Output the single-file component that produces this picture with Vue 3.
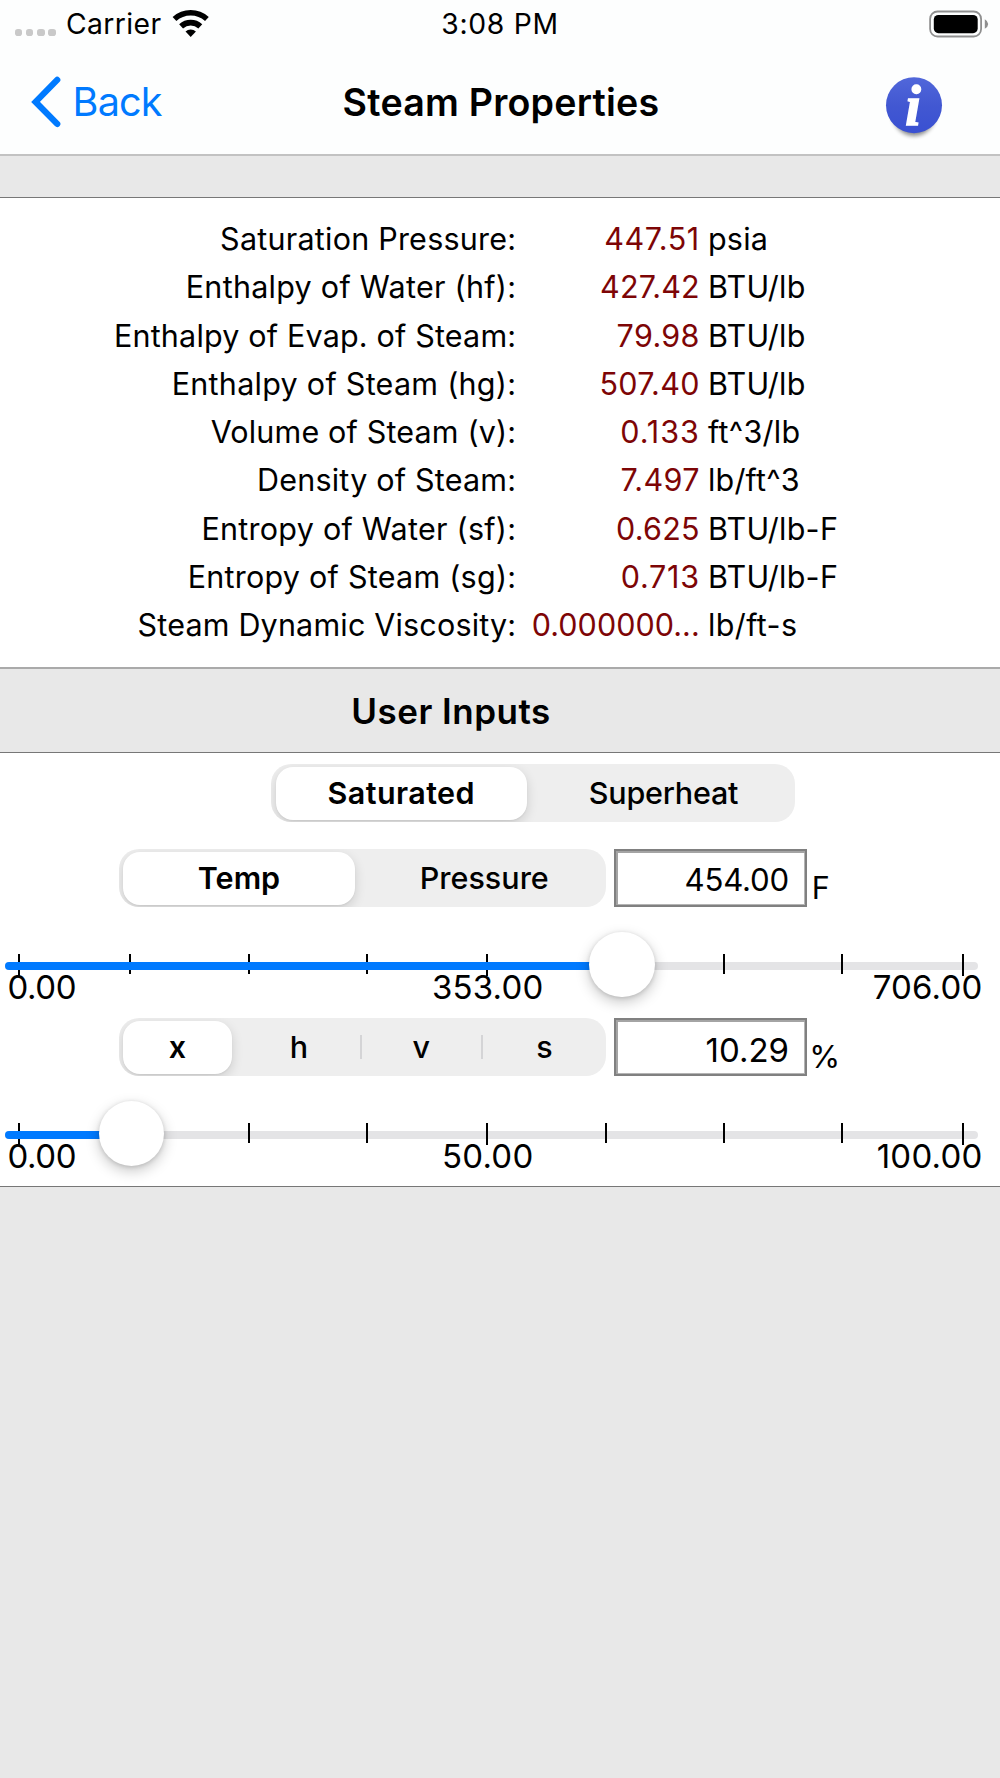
<script setup>
const properties = [
  { label: 'Saturation Pressure:', value: '447.51', unit: 'psia', ls: [0.23, 0.55, 0.2] },
  { label: 'Enthalpy of Water (hf):', value: '427.42', unit: 'BTU/lb', ls: [0.27, 0.15, 0.3] },
  { label: 'Enthalpy of Evap. of Steam:', value: '79.98', unit: 'BTU/lb', ls: [0.18, 0.35, 0.3] },
  { label: 'Enthalpy of Steam (hg):', value: '507.40', unit: 'BTU/lb', ls: [0.27, 0.32, 0.3] },
  { label: 'Volume of Steam (v):', value: '0.133', unit: 'ft^3/lb', ls: [0.16, 0.96, 0.28] },
  { label: 'Density of Steam:', value: '7.497', unit: 'lb/ft^3', ls: [0.21, 0.36, 0.18] },
  { label: 'Entropy of Water (sf):', value: '0.625', unit: 'BTU/lb-F', ls: [0.26, 0.25, 0.28] },
  { label: 'Entropy of Steam (sg):', value: '0.713', unit: 'BTU/lb-F', ls: [0.25, 0.75, 0.28] },
  { label: 'Steam Dynamic Viscosity:', value: '0.000000...', unit: 'lb/ft-s', ls: [0.18, 0.05, 0.38] },
]

const ticks = [
  { x: 18, long: true },
  { x: 129 },
  { x: 247.5 },
  { x: 366 },
  { x: 486.4, long: true },
  { x: 605 },
  { x: 723 },
  { x: 841.4 },
  { x: 962, long: true },
]

const sliders = {
  temp: { knob: 622, labels: ['0.00', '353.00', '706.00'] },
  quality: { knob: 131.7, labels: ['0.00', '50.00', '100.00'] },
}

const spacing = (px) => ({ letterSpacing: px + 'px' })
</script>

<template>
  <div class="screen">
    <header class="top">
      <div class="status">
        <div class="carrier">
          <span class="dots"><i v-for="n in 4" :key="n"></i></span>
          <span class="carrier-name">Carrier</span>
          <svg class="wifi" width="40" height="30" viewBox="171 8 40 30">
            <path d="M174.5 19A24.2 24.2 0 0 1 206.9 19" fill="none" stroke="#000" stroke-width="5.6" />
            <path d="M181.1 26.4A14.3 14.3 0 0 1 200.3 26.4" fill="none" stroke="#000" stroke-width="5.8" />
            <path d="M190.7 37L185.5 31.6A7.6 7.6 0 0 1 195.9 31.6Z" />
          </svg>
        </div>
        <span class="clock">3:08 PM</span>
        <svg class="battery" width="61" height="28" viewBox="929 9.5 61 28">
          <rect x="930.1" y="11" width="51" height="25" rx="7.5" fill="none" stroke="#8f8f8f" stroke-width="1.8" />
          <rect x="933.8" y="14.4" width="43.9" height="18.3" rx="4.6" />
          <path d="M984.8 18.8Q988.2 20.8 988.2 23.5T984.8 28.2Z" fill="#8f8f8f" />
        </svg>
      </div>
      <nav class="nav">
        <a class="back">
          <svg width="32" height="54" viewBox="30 75 32 54">
            <path d="M57.2 79.9L35.6 101.9L57.2 123.9" fill="none" stroke="#007aff" stroke-width="6.3" stroke-linecap="round" />
          </svg>
          <span>Back</span>
        </a>
        <h1 class="title">Steam Properties</h1>
        <svg class="info" width="70" height="74" viewBox="879 70 70 74">
          <defs>
            <linearGradient id="infoFill" x1="0" y1="0" x2="0" y2="1">
              <stop offset="0" stop-color="#5167da" />
              <stop offset="0.5" stop-color="#4258d2" />
              <stop offset="1" stop-color="#3950d2" />
            </linearGradient>
            <filter id="infoShadow" x="-30%" y="-30%" width="160%" height="160%">
              <feGaussianBlur stdDeviation="2" />
            </filter>
          </defs>
          <ellipse cx="914" cy="112" rx="22" ry="24" fill="#000" opacity="0.45" filter="url(#infoShadow)" />
          <circle cx="914" cy="105.2" r="28" fill="url(#infoFill)" />
          <text x="905.2" y="124.8" class="info-i">i</text>
        </svg>
      </nav>
    </header>

    <div class="gap"></div>

    <section class="results">
      <div v-for="p in properties" :key="p.label" class="row">
        <span class="label" :style="spacing(p.ls[0])">{{ p.label }}</span>
        <span class="value" :style="spacing(p.ls[1])">{{ p.value }}</span>
        <span class="unit" :style="spacing(p.ls[2])">{{ p.unit }}</span>
      </div>
    </section>

    <div class="heading"><h2>User Inputs</h2></div>

    <section class="inputs">
      <div class="segmented mode">
        <span class="seg on saturated">Saturated</span>
        <span class="seg superheat">Superheat</span>
      </div>

      <div class="line">
        <div class="segmented">
          <span class="seg on">Temp</span>
          <span class="seg pressure">Pressure</span>
        </div>
        <div class="field small">454.00</div>
        <span class="suffix">F</span>
      </div>
      <div class="slider">
        <div class="track">
          <i v-for="t in ticks" :key="t.x" class="tick" :class="{ long: t.long }" :style="{ left: t.x - 5 + 'px' }"></i>
          <div class="fill" :style="{ width: sliders.temp.knob - 5 + 'px' }"></div>
          <div class="knob" :style="{ left: sliders.temp.knob - 5 + 'px' }"></div>
        </div>
        <div class="labels"><span v-for="l in sliders.temp.labels" :key="l">{{ l }}</span></div>
      </div>

      <div class="line">
        <div class="segmented quad">
          <span class="seg on">x</span>
          <span class="seg second">h</span>
          <i class="divider"></i>
          <span class="seg">v</span>
          <i class="divider"></i>
          <span class="seg last">s</span>
        </div>
        <div class="field">10.29</div>
        <span class="suffix percent">%</span>
      </div>
      <div class="slider">
        <div class="track">
          <i v-for="t in ticks" :key="t.x" class="tick" :class="{ long: t.long }" :style="{ left: t.x - 5 + 'px' }"></i>
          <div class="fill" :style="{ width: sliders.quality.knob - 5 + 'px' }"></div>
          <div class="knob" :style="{ left: sliders.quality.knob - 5 + 'px' }"></div>
        </div>
        <div class="labels"><span v-for="l in sliders.quality.labels" :key="l">{{ l }}</span></div>
      </div>
    </section>
  </div>
</template>

<style>
body {
  margin: 0;
  background: #e8e8e8;
}
</style>

<style scoped>
.screen {
  width: 1000px;
  height: 1778px;
  overflow: hidden;
  background: #e8e8e8;
  color: #000;
  font-family: Inter, "Liberation Sans", sans-serif;
  font-size: 30.5px;
}
.screen * {
  box-sizing: border-box;
}
.top {
  height: 156px;
  background: #fdfefe;
  border-bottom: 2px solid #c2c2c2;
}
.status {
  display: grid;
  grid-template-columns: 1fr auto 1fr;
  height: 47px;
  font-size: 28.3px;
  line-height: 49px;
}
.carrier {
  display: flex;
  align-items: flex-start;
  padding-left: 14.6px;
}
.dots {
  display: flex;
  gap: 3.9px;
  margin-top: 29px;
}
.dots i {
  width: 7.4px;
  height: 7.4px;
  border-radius: 2.8px;
  background: #c9c9c9;
}
.carrier-name {
  width: 105.3px;
  margin-left: 10.1px;
  letter-spacing: 0.4px;
}
.wifi {
  margin-top: 8px;
}
.clock {
  letter-spacing: 0.71px;
}
.battery {
  justify-self: end;
  margin: 9.5px 10px 0 0;
}
.nav {
  display: grid;
  grid-template-columns: 1fr auto 1fr;
  height: 107px;
}
.back {
  display: flex;
  padding-left: 30px;
  color: #007aff;
  font-size: 39.6px;
  letter-spacing: -0.84px;
  line-height: 54px;
}
.back svg {
  margin-top: 28px;
}
.back span {
  margin: 28px 0 0 10.6px;
}
.title {
  margin: 28.5px -1px 0 1px;
  font-size: 37.6px;
  font-weight: 600;
  line-height: 54px;
  letter-spacing: 0.22px;
}
.info {
  justify-self: end;
  margin: 23px 51px 0 0;
}
.info-i {
  fill: #fff;
  stroke: #fff;
  stroke-width: 1.4px;
  font: italic bold 56px "Liberation Serif", serif;
}
.gap {
  height: 41px;
}
.results {
  height: 470px;
  padding-top: 17px;
  background: #fff;
  border-top: 1px solid #777;
}
.row {
  display: flex;
  height: 48.3px;
  line-height: 48.3px;
  white-space: nowrap;
}
.label {
  width: 516.3px;
  text-align: right;
}
.value {
  width: 183.5px;
  text-align: right;
  color: #7d0506;
}
.unit {
  margin-left: 8.2px;
}
.heading {
  height: 85px;
  padding: 0 98px 0 0;
  border-top: 2px solid #aaa;
}
.heading h2 {
  margin: 0;
  font-size: 35px;
  font-weight: 600;
  line-height: 85px;
  letter-spacing: 0.5px;
  text-align: center;
}
.inputs {
  height: 435px;
  padding-top: 11px;
  background: #fff;
  border-top: 1px solid #777;
  border-bottom: 1px solid #777;
}
.segmented {
  display: flex;
  align-items: center;
  width: 487.5px;
  height: 58px;
  padding: 0 4.5px;
  border-radius: 20px;
  background: #eee;
  overflow: hidden;
  font-weight: 500;
}
.mode {
  width: 523.5px;
  margin: 0 0 27px 271px;
}
.seg {
  flex: 1;
  line-height: 51px;
  height: 53px;
  text-align: center;
}
.seg.on {
  flex: none;
  width: 232px;
  height: 53px;
  border-radius: 17px;
  background: #fff;
  box-shadow: 0 4px 12px rgba(0, 0, 0, 0.14), 0 1px 2px rgba(0, 0, 0, 0.06);
  font-weight: 600;
}
.seg.saturated {
  width: 251.5px;
  letter-spacing: 0.4px;
}
.seg.superheat {
  padding-left: 10px;
  letter-spacing: -0.22px;
}
.seg.pressure {
  padding-left: 12px;
}
.quad .seg {
  width: 119px;
  flex: none;
}
.quad .seg.on {
  width: 109px;
}
.quad .seg.second {
  width: 128px;
  padding-left: 6px;
}
.quad .seg.last {
  padding-left: 5px;
}
.divider {
  width: 2px;
  height: 24px;
  background: #d4d4d6;
}
.line {
  display: flex;
  height: 58px;
  padding-left: 118.5px;
  white-space: nowrap;
}
.field {
  width: 193px;
  height: 58px;
  margin-left: 7.7px;
  padding-right: 15.7px;
  border: 2px solid #808080;
  box-shadow: inset 2px 2px 0 #a4a4a4, inset -1px -1px 0 #b4b4b4;
  font-size: 33px;
  line-height: 60px;
  text-align: right;
}
.field.small {
  font-size: 31.2px;
  line-height: 58px;
  letter-spacing: -0.2px;
}
.suffix {
  margin-left: 5px;
  line-height: 77px;
}
.suffix.percent {
  margin-left: 2.5px;
  font-size: 31.5px;
}
.slider {
  height: 111px;
  padding: 55px 22px 0 5px;
}
.track {
  position: relative;
  height: 8px;
  border-radius: 4px;
  background: #e4e4e6;
}
.tick {
  position: absolute;
  top: -8px;
  width: 2px;
  height: 20px;
  background: #000;
}
.tick.long {
  height: 22px;
}
.fill {
  position: absolute;
  top: 0;
  left: 0;
  height: 8px;
  border-radius: 4px;
  background: #007aff;
}
.knob {
  position: absolute;
  top: -30.3px;
  width: 65.4px;
  height: 65.4px;
  margin-left: -32.7px;
  border-radius: 50%;
  background: #fff;
  box-shadow: 0 5px 14px rgba(0, 0, 0, 0.22), 0 1px 4px rgba(0, 0, 0, 0.14);
}
.labels {
  display: grid;
  grid-template-columns: 1fr 1fr 1fr;
  margin: -3px -5px 0 2.5px;
  padding-right: 15px;
  font-size: 33px;
  line-height: 40px;
  letter-spacing: 0.2px;
}
.labels span:first-child {
  letter-spacing: -0.4px;
}
.labels span:nth-child(2) {
  text-align: center;
}
.labels span:last-child {
  margin-right: -14.5px;
  text-align: right;
}
</style>
